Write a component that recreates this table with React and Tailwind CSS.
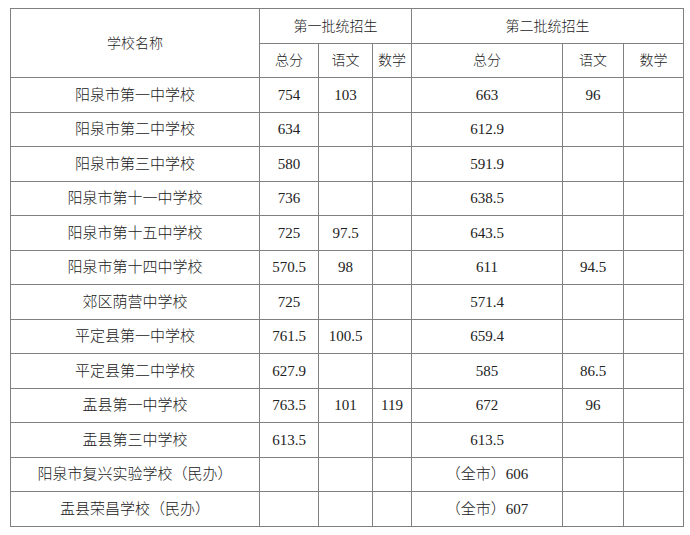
import React from "react";

const rows = [
  ["阳泉市第一中学校", "754", "103", "", "663", "96", ""],
  ["阳泉市第二中学校", "634", "", "", "612.9", "", ""],
  ["阳泉市第三中学校", "580", "", "", "591.9", "", ""],
  ["阳泉市第十一中学校", "736", "", "", "638.5", "", ""],
  ["阳泉市第十五中学校", "725", "97.5", "", "643.5", "", ""],
  ["阳泉市第十四中学校", "570.5", "98", "", "611", "94.5", ""],
  ["郊区荫营中学校", "725", "", "", "571.4", "", ""],
  ["平定县第一中学校", "761.5", "100.5", "", "659.4", "", ""],
  ["平定县第二中学校", "627.9", "", "", "585", "86.5", ""],
  ["盂县第一中学校", "763.5", "101", "119", "672", "96", ""],
  ["盂县第三中学校", "613.5", "", "", "613.5", "", ""],
  ["阳泉市复兴实验学校（民办）", "", "", "", "（全市）606", "", ""],
  ["盂县荣昌学校（民办）", "", "", "", "（全市）607", "", ""],
];

const cell = "border border-[#808080] text-center align-middle p-0";

export default function App() {
  return (
    <div className="w-[690px] h-[535px] bg-white pt-[8px] pl-[10px] text-[#222] text-[15px] font-light font-['Liberation_Serif','Noto_Sans_CJK_SC',serif]">
      <table className="table-fixed border-collapse w-[673px]">
        <colgroup>
          <col className="w-[249px]" />
          <col className="w-[59px]" />
          <col className="w-[54px]" />
          <col className="w-[39px]" />
          <col className="w-[151px]" />
          <col className="w-[61px]" />
          <col className="w-[60px]" />
        </colgroup>
        <thead>
          <tr className="h-[35px]">
            <th rowSpan={2} className={`${cell} font-light text-[14px]`}>学校名称</th>
            <th colSpan={3} className={`${cell} font-light text-[14px]`}>第一批统招生</th>
            <th colSpan={3} className={`${cell} font-light text-[14px]`}>第二批统招生</th>
          </tr>
          <tr className="h-[34px]">
            {["总分", "语文", "数学", "总分", "语文", "数学"].map((h, i) => (
              <th key={i} className={`${cell} font-light text-[14px]`}>{h}</th>
            ))}
          </tr>
        </thead>
        <tbody>
          {rows.map((r, i) => (
            <tr key={i} className="h-[34.5px]">
              {r.map((c, j) => (
                <td key={j} className={cell}>{c}</td>
              ))}
            </tr>
          ))}
        </tbody>
      </table>
    </div>
  );
}
